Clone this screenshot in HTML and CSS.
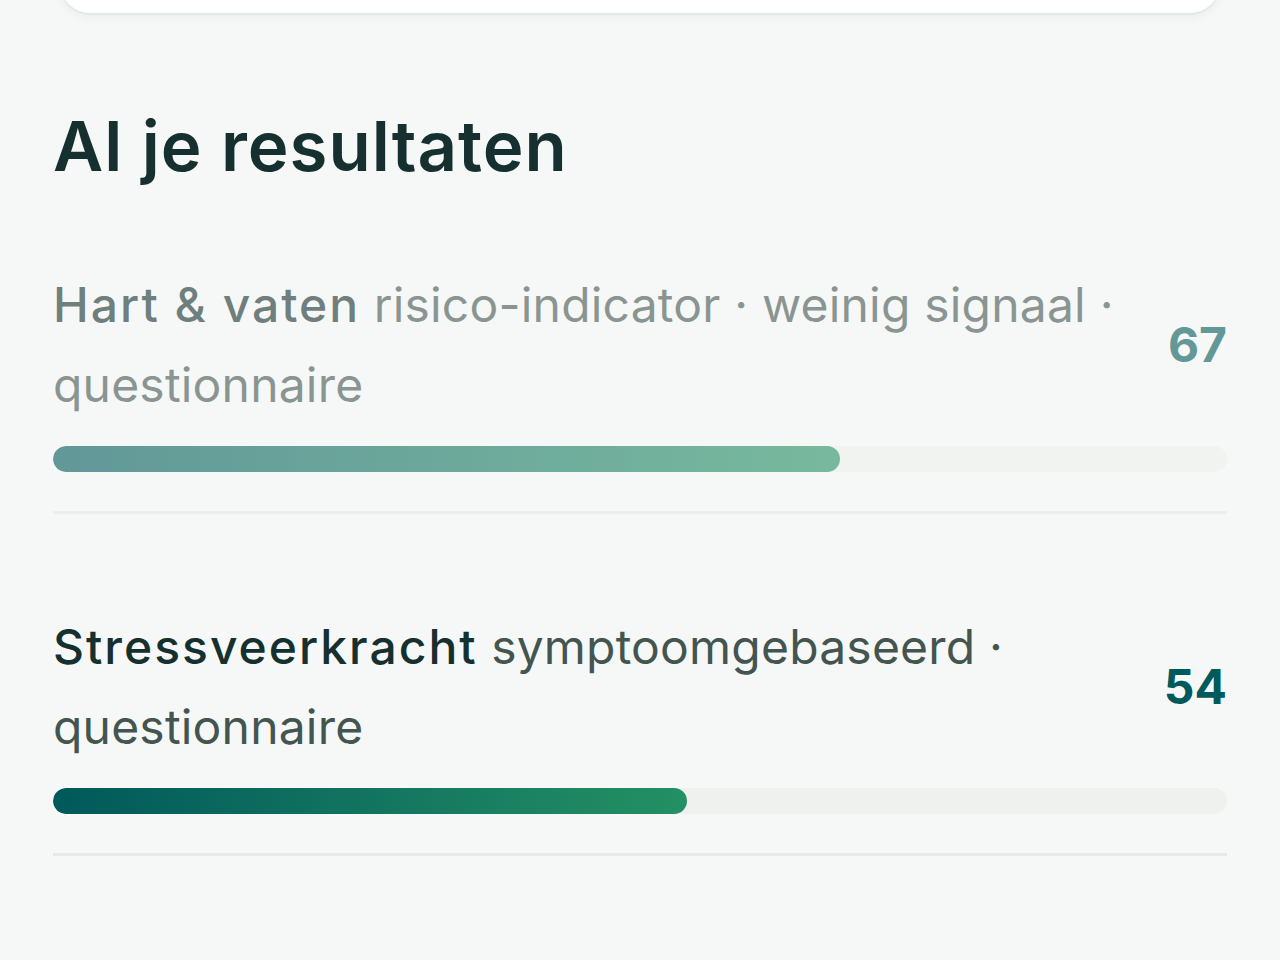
FILE: index.html
```html
<!DOCTYPE html>
<html lang="nl">
<head>
    <meta charset="UTF-8">
    <meta name="viewport" content="width=device-width, initial-scale=1.0">
    <title>Al je resultaten</title>
    <link rel="stylesheet" href="styles.css">
</head>
<body>
    <div class="page">
        <div class="summary-card"></div>

        <h1 class="section-title">Al je resultaten</h1>

        <div class="results">
            <div class="result result-muted">
                <div class="result-head">
                    <div class="result-text">
                        <div class="result-line">
                            <span class="result-name">Hart &amp; vaten</span>
                            <span class="result-meta">risico-indicator · weinig signaal ·</span>
                        </div>
                        <div class="result-line result-meta">questionnaire</div>
                    </div>
                    <div class="result-score">67</div>
                </div>
                <div class="bar">
                    <div class="bar-fill" style="width: 67%"></div>
                </div>
            </div>

            <div class="result">
                <div class="result-head">
                    <div class="result-text">
                        <div class="result-line">
                            <span class="result-name">Stressveerkracht</span>
                            <span class="result-meta">symptoomgebaseerd ·</span>
                        </div>
                        <div class="result-line result-meta">questionnaire</div>
                    </div>
                    <div class="result-score">54</div>
                </div>
                <div class="bar">
                    <div class="bar-fill" style="width: 54%"></div>
                </div>
            </div>
        </div>
    </div>
</body>
</html>
```

FILE: styles.css
```css
:root {
    --bg: #f6f8f7;
    --ink: #15302e;
    --ink-soft: #44554f;
    --teal: #00595a;
    --green: #249064;
    --track: #eff1ee;
    --line: #e5eae8;
}

body {
    margin: 0;
    background: var(--bg);
    font-family: Inter, "Noto Sans", sans-serif;
    color: var(--ink);
}

.page {
    padding: 0 53px;
}

.summary-card {
    height: 60px;
    margin: -47px 7px 0;
    background: #fff;
    border-radius: 40px;
    box-shadow: 0 2px 0 #e3e8e6, 0 4px 10px rgba(30, 60, 55, 0.06);
}

.section-title {
    margin: 99px 0 84px;
    font-size: 69px;
    line-height: 1;
    font-weight: 600;
    letter-spacing: 1px;
    color: var(--ink);
}

.result {
    padding-bottom: 39px;
    border-bottom: 3px solid var(--line);
}

.result + .result {
    padding-top: 93px;
}

.result-muted {
    opacity: 0.6;
}

.result-head {
    display: flex;
    align-items: center;
    gap: 40px;
}

.result-text {
    flex: 1;
    font-size: 48px;
    line-height: 80px;
}

.result-line {
    white-space: nowrap;
}

.result-name {
    font-weight: 500;
    letter-spacing: 2px;
    color: var(--ink);
}

.result-meta {
    font-weight: 400;
    letter-spacing: 0.2px;
    color: var(--ink-soft);
}

.result-score {
    font-size: 48px;
    line-height: 1;
    font-weight: 700;
    color: var(--teal);
}

.bar {
    height: 26px;
    margin-top: 21px;
    background: var(--track);
    border-radius: 13px;
    overflow: hidden;
}

.bar-fill {
    height: 100%;
    border-radius: 13px;
    background: linear-gradient(90deg, var(--teal), var(--green));
}
```
